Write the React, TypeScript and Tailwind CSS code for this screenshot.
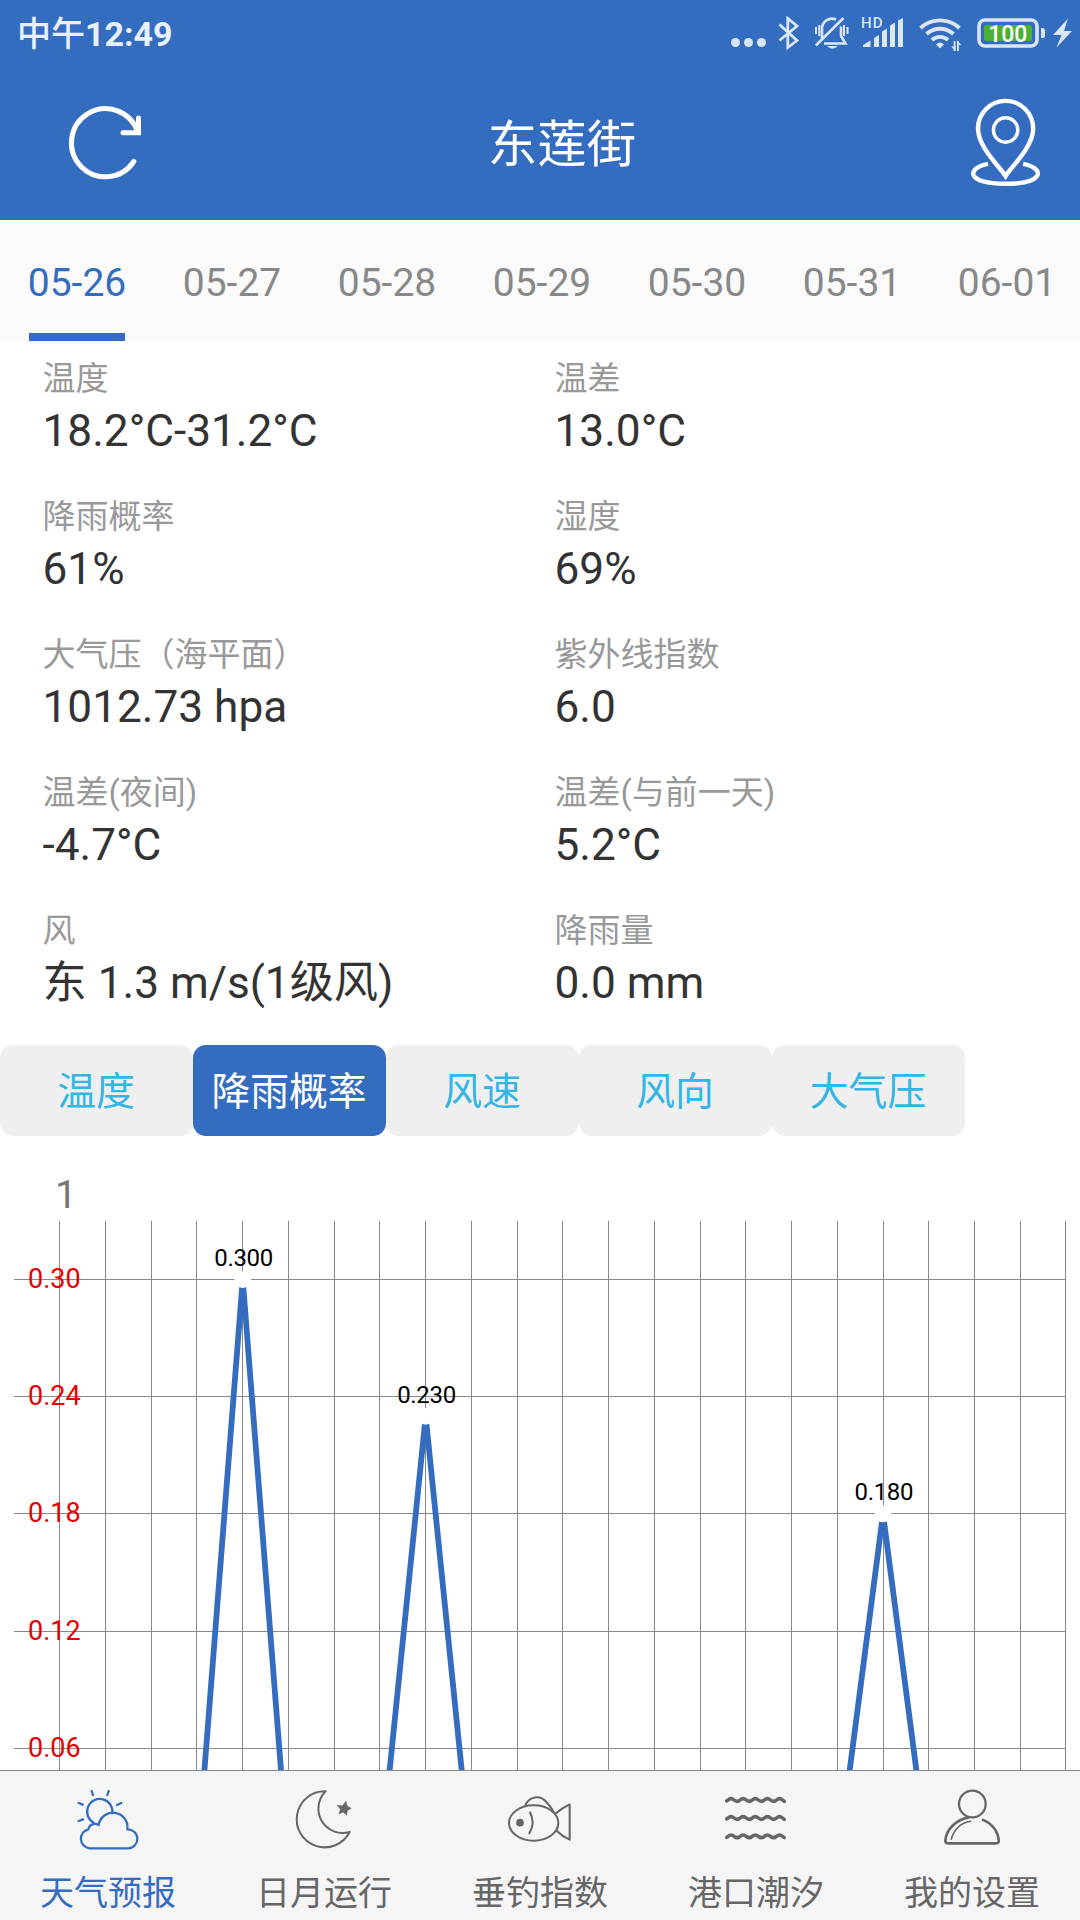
import { useState } from "react";
import type { ReactNode } from "react";
import clsx from "clsx";

const DATES = ["05-26", "05-27", "05-28", "05-29", "05-30", "05-31", "06-01"];

const METRICS = [
  { label: "温度", value: "18.2°C-31.2°C" },
  { label: "温差", value: "13.0°C" },
  { label: "降雨概率", value: "61%" },
  { label: "湿度", value: "69%" },
  { label: "大气压（海平面）", value: "1012.73 hpa" },
  { label: "紫外线指数", value: "6.0" },
  { label: "温差(夜间)", value: "-4.7°C" },
  { label: "温差(与前一天)", value: "5.2°C" },
  { label: "风", value: "东 1.3 m/s(1级风)" },
  { label: "降雨量", value: "0.0 mm" },
];

const SERIES = ["温度", "降雨概率", "风速", "风向", "大气压"];

// Hourly rain probability, only the wet hours are non-zero
const RAIN = Array.from({ length: 23 }, (_, i) =>
  i === 4 ? 0.3 : i === 8 ? 0.23 : i === 18 ? 0.18 : 0
);
const Y_TICKS = [0.3, 0.24, 0.18, 0.12, 0.06];

/* ── Status bar ─────────────────────────────────── */

function StatusBar() {
  return (
    <div className="flex h-[66px] items-start justify-between pl-[17px] pr-[8px] text-[#dbe6f5]">
      <span className="mt-[10px] text-[34px] font-bold leading-[48px] text-[#e8f0fb]">
        <span className="font-medium">中午</span>12:49
      </span>
      <div className="flex">
        <svg width="36" height="60" viewBox="731 0 36 60" fill="currentColor">
          <circle cx="735.5" cy="42.5" r="4.5" />
          <circle cx="748.5" cy="42.5" r="4.5" />
          <circle cx="761.5" cy="42.5" r="4.5" />
        </svg>
        <svg className="ml-[10px]" width="24" height="60" viewBox="777 0 24 60" fill="none" stroke="currentColor" strokeWidth="2.8">
          <path d="M779.5 24.5L797 40.5L787.8 47.5V18.5L797 26L779.5 40.5" />
        </svg>
        <svg className="ml-[13px]" width="36" height="60" viewBox="814 0 36 60" fill="none" stroke="currentColor" strokeWidth="2.6">
          <path d="M822 39V29A10 10 0 0 1 836 19.5M841 26.5V36L845.5 43.5H824" />
          <path d="M815.8 45.5L843.5 18" />
          <path d="M816 27v7M819.3 25v11M844 25v11M847.5 27v7" strokeWidth="2" />
          <path d="M827 46h11q-5.500 5.500-11 0z" fill="currentColor" stroke="none" />
        </svg>
        <svg className="ml-[11px]" width="43" height="60" viewBox="861 0 43 60" fill="currentColor">
          <text x="861" y="28" fontSize="15" fontWeight="500" letterSpacing="1">HD</text>
          <path d="M863 47V45l7.500-4.500V47zM874 47V38l5-3V47zM882 47V31.500l5-3V47zM890 47V25.500l5-3V47zM898 47V20.500l5-2.500V47z" />
        </svg>
        <svg className="ml-[14px]" width="44" height="60" viewBox="918 0 44 60" fill="none" stroke="currentColor" strokeWidth="3.800">
          <path d="M920.5 28A29 29 0 0 1 959.500 28" />
          <path d="M926.500 34A20 20 0 0 1 953.500 34" />
          <path d="M932 40A12 12 0 0 1 948 40" />
          <path d="M936 44.500Q940 40.500 944 44.500L940 48.500Z" fill="currentColor" stroke="none" />
          <path d="M951 46.500h4.500v4.500z M961.500 45h-4.500v-4.500z" fill="currentColor" stroke="none" />
          <path d="M954.600 41v10M957.900 41v10" strokeWidth="1.800" />
        </svg>
        <svg className="ml-[15px]" width="69" height="60" viewBox="977 0 69 60">
          <rect x="979" y="20" width="58" height="26" rx="6" fill="none" stroke="currentColor" strokeWidth="3.600" />
          <rect x="984" y="25" width="48" height="16" rx="2.500" fill="#4bb035" />
          <path d="M1041 28h1.500q2.500 0 2.500 2.500v5q0 2.500-2.500 2.500h-1.500z" fill="currentColor" />
          <text x="1007.800" y="41.500" textAnchor="middle" fontSize="23" fontWeight="500" fill="#fff">100</text>
        </svg>
        <svg className="ml-[7px]" width="19" height="60" viewBox="1053 0 19 60" fill="currentColor">
          <path d="M1068 18.500L1053 35H1061.500L1056.500 47.500L1072 31H1064Z" />
        </svg>
      </div>
    </div>
  );
}

/* ── Header ─────────────────────────────────────── */

function Header() {
  return (
    <header className="h-[220px] bg-[#346dbf]">
      <StatusBar />
      <div className="flex h-[154px] items-start justify-between pl-[64px] pr-[34px]">
        <button className="mt-[36px]">
          <svg width="80" height="80" viewBox="64 102 80 80" fill="none" stroke="#fff" strokeWidth="5" strokeLinecap="round">
            <path d="M137.500 131.500A34 34 0 1 0 133.800 161.500" />
            <path d="M138.500 118V132.800H123" />
          </svg>
        </button>
        <h1 className="mt-[43px] pl-[14px] text-[49.5px] leading-[72px] text-white">东莲街</h1>
        <button className="mt-[30px]">
          <svg width="80" height="96" viewBox="966 96 80 96" fill="none" stroke="#fff">
            <path d="M1005.600 176C1000 167 978 147 978 128.500A27.600 27.600 0 0 1 1033.200 128.500C1033.200 147 1011 167 1005.600 176Z" strokeWidth="4.400" />
            <circle cx="1005.600" cy="130" r="12.200" strokeWidth="3.400" />
            <path d="M988 163.800C966 168 966 183.800 1005.600 183.800S1045 168 1023.200 163.800" strokeWidth="4.400" />
          </svg>
        </button>
      </div>
    </header>
  );
}

/* ── Rain chart ─────────────────────────────────── */

function RainChart() {
  const top = 1156;
  const px = (i: number) => 59.78 + i * 45.736;
  // Grid lines sit on whole pixels
  const snap = (v: number) => Math.floor(v) + 0.5;
  const py = (v: number) => 1865.5 - v * 1953 - top;
  const line = RAIN.map((v, i) => `${px(i)},${py(v)}`).join(" ");

  return (
    <svg className="block" width="1080" height="614" viewBox="0 0 1080 614">
      <text x="55" y="52" fontSize="39" fill="#777">1</text>
      <g stroke="#888" strokeWidth="1">
        {RAIN.map((_, i) => (
          <path key={i} d={`M${snap(px(i))} 65V614`} />
        ))}
        {Y_TICKS.map((t) => (
          <path key={t} d={`M14 ${snap(py(t))}H1066`} />
        ))}
      </g>
      {Y_TICKS.map((t) => (
        <text key={t} x="28" y={py(t) + 8.5} fontSize="27" fill="#e60000">{t.toFixed(2)}</text>
      ))}
      <polyline points={line} fill="none" stroke="#346dbf" strokeWidth="5.800" strokeLinejoin="bevel" />
      {RAIN.map((v, i) =>
        v > 0 ? (
          <g key={i}>
            <circle cx={px(i)} cy={py(v)} r="8.400" fill="#fff" />
            <text x={px(i) + 1} y={py(v) - 13.6} fontSize="24" textAnchor="middle" textLength="59" fill="#000">{v.toFixed(3)}</text>
          </g>
        ) : null
      )}
    </svg>
  );
}

/* ── Bottom navigation ──────────────────────────── */

function NavIcon({ children }: { children: ReactNode }) {
  return (
    <svg
      className="block"
      width="64"
      height="64"
      viewBox="0 0 192 192"
      fill="none"
      stroke="currentColor"
      strokeWidth="6.800"
      strokeLinecap="round"
      strokeLinejoin="round"
    >
      {children}
    </svg>
  );
}

const WAVE = "q9 -8 18.200 0t18.200 0t18.200 0t18.200 0t18.200 0t18.200 0t18.200 0t18.200 0t18.200 0l5 4";

const NAV = [
  {
    label: "天气预报",
    icon: (
      <NavIcon>
        <path d="M40 181H157A28 28 0 0 0 154 124A43 43 0 0 0 68 111A20 20 0 0 0 37 124A29 29 0 0 0 40 181Z" />
        <path d="M109 76A38 38 0 1 0 53 104" />
        <path d="M47 9L51 21M98 9L94 21M8 45L20 50M123 51L136 45M8 99L21 94" strokeWidth="7" />
      </NavIcon>
    ),
  },
  {
    label: "日月运行",
    icon: (
      <NavIcon>
        <path d="M101 10A84 84 0 1 0 173 132A73 73 0 0 1 101 10Z" strokeWidth="6" />
        <path d="M162 40L166 54L178 61L166 68L164 82L154 73L140 78L145 64L135 52L151 53Z" fill="currentColor" strokeWidth="1" />
      </NavIcon>
    ),
  },
  {
    label: "垂钓指数",
    icon: (
      <NavIcon>
        <g strokeWidth="6.200">
          <ellipse cx="77" cy="105" rx="74" ry="53" />
          <path d="M66 73Q83 105 64 136" />
          <path d="M144 76Q162 60 185 49V155Q163 145 146 128" />
          <path d="M52 52C64 24 96 20 115 42Q129 56 137 72" />
        </g>
        <circle cx="36" cy="104" r="11.500" fill="currentColor" stroke="none" />
      </NavIcon>
    ),
  },
  {
    label: "港口潮汐",
    icon: (
      <NavIcon>
        <g strokeWidth="10.500">
          <path d={`M8 39l4 -3${WAVE}`} />
          <path d={`M8 93l4 -3${WAVE}`} />
          <path d={`M8 148l4 -3${WAVE}`} />
        </g>
      </NavIcon>
    ),
  },
  {
    label: "我的设置",
    icon: (
      <NavIcon>
        <circle cx="97" cy="48" r="40" />
        <path d="M86 88C50 94 18 124 16 158Q16 166 26 166H168Q178 166 176 156C174 130 156 106 129 96" strokeWidth="8" />
        <path d="M34 154C40 126 62 104 92 100" strokeWidth="4.500" />
      </NavIcon>
    ),
  },
];

export default function App() {
  const [date, setDate] = useState(0);
  const [series, setSeries] = useState(1);
  const [page, setPage] = useState(0);

  return (
    <div className="flex h-[1920px] w-[1080px] flex-col overflow-hidden bg-white font-[Roboto,'Noto_Sans_CJK_SC',sans-serif]">
      <Header />

      {/* Dates */}
      <div className="flex h-[121px] shrink-0 overflow-hidden bg-[#fafafa]">
        {DATES.map((d, i) => (
          <button
            key={d}
            onClick={() => setDate(i)}
            className={clsx(
              "flex w-[155px] shrink-0 flex-col items-center justify-between pr-px pt-[40px] text-[39px] leading-[46px]",
              i === date ? "text-[#346dbf]" : "text-[#888]"
            )}
          >
            {d}
            <span className={clsx("h-2 w-24", i === date && "bg-[#346dbf]")} />
          </button>
        ))}
      </div>

      {/* Metrics */}
      <div className="grid h-[704px] shrink-0 auto-rows-[138px] grid-cols-[512px_1fr] pt-[13px]">
        {METRICS.map((m) => (
          <div key={m.label} className="pl-[42.5px]">
            <p className="h-[49px] text-[33px] leading-[50px] text-[#999]">{m.label}</p>
            <p className="h-[56px] text-[44.2px] leading-[56px] text-[#333]">{m.value}</p>
          </div>
        ))}
      </div>

      {/* Series switch */}
      <div className="flex h-[91px] shrink-0">
        {SERIES.map((s, i) => (
          <button
            key={s}
            onClick={() => setSeries(i)}
            className={clsx(
              "w-[193px] rounded-[13px] pr-px pt-1 text-[38.8px]",
              i === series ? "bg-[#346dbf] text-white" : "bg-[#efefef] text-[#33b5e5]"
            )}
          >
            {s}
          </button>
        ))}
      </div>

      <div className="h-[634px] shrink-0 overflow-hidden pt-[20px]">
        <RainChart />
      </div>

      <nav className="flex h-[150px] shrink-0 border-t border-[#888] bg-[#f5f5f5]">
        {NAV.map((n, i) => (
          <button
            key={n.label}
            onClick={() => setPage(i)}
            className={clsx(
              "flex flex-1 flex-col items-center pt-[17px]",
              i === page ? "text-[#346dbf]" : "text-[#666]"
            )}
          >
            {n.icon}
            <span className="mt-[16px] text-[34px] leading-[50px]">{n.label}</span>
          </button>
        ))}
      </nav>
    </div>
  );
}
